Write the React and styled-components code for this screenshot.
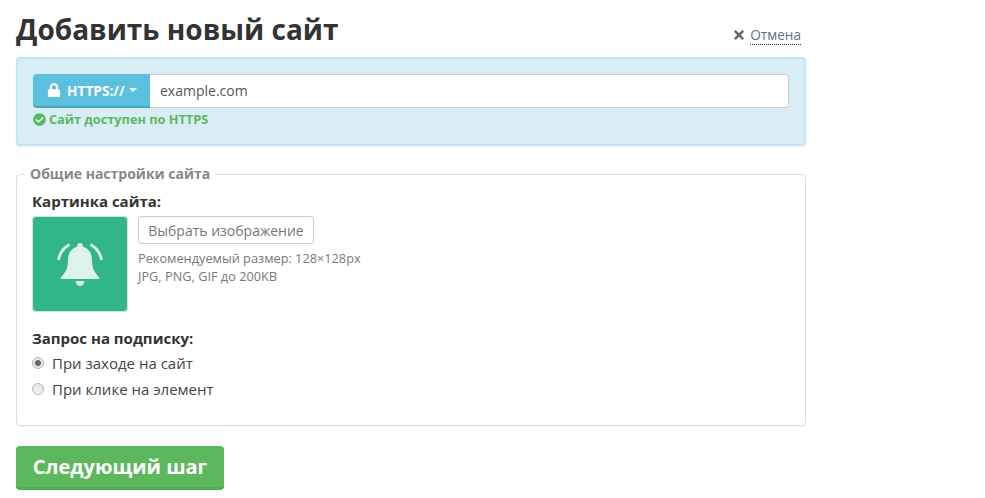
import React from 'react';
import styled, { createGlobalStyle } from 'styled-components';
import { FaLock, FaCheckCircle, FaTimes } from 'react-icons/fa';

const GlobalStyle = createGlobalStyle`
  html, body {
    margin: 0;
    background: #fff;
  }
  body {
    font-family: "Open Sans", "Liberation Sans", sans-serif;
    font-size: 14px;
    color: #333;
  }
`;

const BellLogo = () => (
  <svg width="48" height="48" viewBox="0 0 48 48">
    <path
      fill="#dcf4ea"
      d="M24 3c1.600 0 2.800 1.200 2.800 2.600v1.200C33 8.500 36 13.500 36 20c0 8 2 12 7 17 .6 .7 .3 2-.8 2H5.800c-1.100 0-1.400-1.300-.8-2 5-5 7-9 7-17 0-6.500 3-11.500 9.200-13.200V5.600C21.200 4.200 22.400 3 24 3z"
    />
    <path fill="#dcf4ea" d="M19.500 41h9c-.6 3.200-2.400 5-4.500 5s-3.900-1.800-4.500-5z" />
    <path fill="none" stroke="#dcf4ea" strokeWidth="2.800" d="M13.500 4.500C7.500 8 3.500 13 2.500 20" />
    <path fill="none" stroke="#dcf4ea" strokeWidth="2.800" d="M34.500 4.500C40.500 8 44.500 13 45.500 20" />
  </svg>
);

const App = () => (
  <Page>
    <GlobalStyle />
    <Header>
      <Title>Добавить новый сайт</Title>
      <Cancel>
        <FaTimes size={14} />
        <CancelLink>Отмена</CancelLink>
      </Cancel>
    </Header>

    <UrlPanel>
      <InputGroup>
        <ProtocolButton>
          <FaLock size={14} />
          <span>HTTPS://</span>
          <Caret />
        </ProtocolButton>
        <UrlInput defaultValue="example.com" />
      </InputGroup>
      <Status>
        <FaCheckCircle size={13} />
        Сайт доступен по HTTPS
      </Status>
    </UrlPanel>

    <Settings>
      <Legend>Общие настройки сайта</Legend>
      <FieldLabel>Картинка сайта:</FieldLabel>
      <ImageRow>
        <SiteImage>
          <BellLogo />
        </SiteImage>
        <ImageInfo>
          <ChooseButton>Выбрать изображение</ChooseButton>
          <Hint>
            Рекомендуемый размер: 128×128px
            <br />
            JPG, PNG, GIF до 200KB
          </Hint>
        </ImageInfo>
      </ImageRow>
      <FieldLabel>Запрос на подписку:</FieldLabel>
      <RadioGroup>
        <RadioRow>
          <Radio $checked />
          При заходе на сайт
        </RadioRow>
        <RadioRow>
          <Radio />
          При клике на элемент
        </RadioRow>
      </RadioGroup>
    </Settings>

    <NextButton>Следующий шаг</NextButton>
  </Page>
);

const Page = styled.div`
  width: 790px;
  margin-left: 16px;
  padding-top: 10px;
`;

const Header = styled.div`
  display: flex;
  justify-content: space-between;
  align-items: flex-end;
  height: 47px;
`;

const Title = styled.h1`
  margin: 0;
  font-size: 28px;
  line-height: 38px;
  font-weight: 700;
  color: #333;
  align-self: flex-start;
`;

const Cancel = styled.div`
  display: flex;
  align-items: center;
  gap: 4px;
  margin: 0 5px 12px 0;
  color: #666;
  font-size: 14px;
  line-height: 19px;
`;

const CancelLink = styled.a`
  color: #5a7184;
  border-bottom: 1px dotted #333;
  font-size: 13.6px;
`;

const UrlPanel = styled.div`
  box-sizing: border-box;
  height: 89px;
  padding: 15px;
  background: #d9edf7;
  border: 2px solid #bce8f1;
  border-radius: 4px;
  box-shadow: 0 1px 3px rgba(0, 0, 0, 0.08);
`;

const InputGroup = styled.div`
  display: flex;
  height: 34px;
`;

const ProtocolButton = styled.button`
  display: flex;
  align-items: center;
  gap: 6px;
  box-sizing: border-box;
  width: 117px;
  padding: 0 0 0 14px;
  border: none;
  border-bottom: 2px solid #46a3c4;
  border-radius: 4px 0 0 4px;
  background: #5bc0de;
  color: #fff;
  font-family: inherit;
  font-size: 13.7px;
  font-weight: 700;
`;

const Caret = styled.i`
  width: 0;
  height: 0;
  margin-left: -2px;
  border-left: 4px solid transparent;
  border-right: 4px solid transparent;
  border-top: 4px solid #fff;
`;

const UrlInput = styled.input`
  flex: 1;
  box-sizing: border-box;
  padding: 0 10px 2px;
  border: 1px solid #ccc;
  border-left: none;
  border-radius: 0 4px 4px 0;
  background: #fff;
  color: #555;
  font-family: inherit;
  font-size: 14px;
  outline: none;
`;

const Status = styled.div`
  display: flex;
  align-items: center;
  gap: 3px;
  margin-top: 2px;
  color: #5cb85c;
  font-size: 12.75px;
  line-height: 18px;
  font-weight: 700;
`;

const Settings = styled.fieldset`
  box-sizing: border-box;
  height: 262px;
  margin: 18px 0 0;
  padding: 6px 15px 0;
  border: 1px solid #ddd;
  border-radius: 4px;
  box-shadow: 0 1px 1px rgba(0, 0, 0, 0.05);
`;

const Legend = styled.legend`
  padding: 0 5px 2px;
  margin-left: -7px;
  color: #888;
  font-size: 14px;
  line-height: 19px;
  font-weight: 700;
`;

const FieldLabel = styled.div`
  color: #333;
  font-size: 15px;
  line-height: 20px;
  font-weight: 700;
`;

const ImageRow = styled.div`
  display: flex;
  gap: 10px;
  margin: 5px 0 16px;
`;

const SiteImage = styled.div`
  display: flex;
  align-items: center;
  justify-content: center;
  box-sizing: border-box;
  width: 96px;
  height: 96px;
  border: 1px solid #ddd;
  border-radius: 4px;
  background: #31b68b;
`;

const ImageInfo = styled.div`
  display: flex;
  flex-direction: column;
  align-items: flex-start;
`;

const ChooseButton = styled.button`
  box-sizing: border-box;
  width: 176px;
  height: 28px;
  padding: 0;
  border: 1px solid #ccc;
  border-radius: 3px;
  background: #fff;
  color: #777;
  font-family: inherit;
  font-size: 14px;
`;

const Hint = styled.div`
  margin-top: 5px;
  color: #777;
  font-size: 12.75px;
  line-height: 18px;
`;

const RadioGroup = styled.div`
  margin-top: 2px;
`;

const RadioRow = styled.label`
  display: flex;
  align-items: center;
  gap: 8px;
  height: 26px;
  color: #444;
  font-size: 15px;
`;

const Radio = styled.span`
  box-sizing: border-box;
  width: 12px;
  height: 12px;
  border-radius: 50%;
  border: 1px solid #b5b5b5;
  background: ${(p) =>
    p.$checked
      ? 'radial-gradient(circle, #666 0, #666 2.5px, #e8e8e8 3.5px)'
      : 'linear-gradient(#e4e4e4, #f4f4f4)'};
`;

const NextButton = styled.button`
  display: block;
  box-sizing: border-box;
  width: 208px;
  height: 44px;
  margin-top: 20px;
  padding: 0;
  border: none;
  border-bottom: 3px solid #4cae4c;
  border-radius: 4px;
  background: #5cb85c;
  color: #fff;
  font-family: inherit;
  font-size: 20px;
  font-weight: 700;
`;

export default App;
